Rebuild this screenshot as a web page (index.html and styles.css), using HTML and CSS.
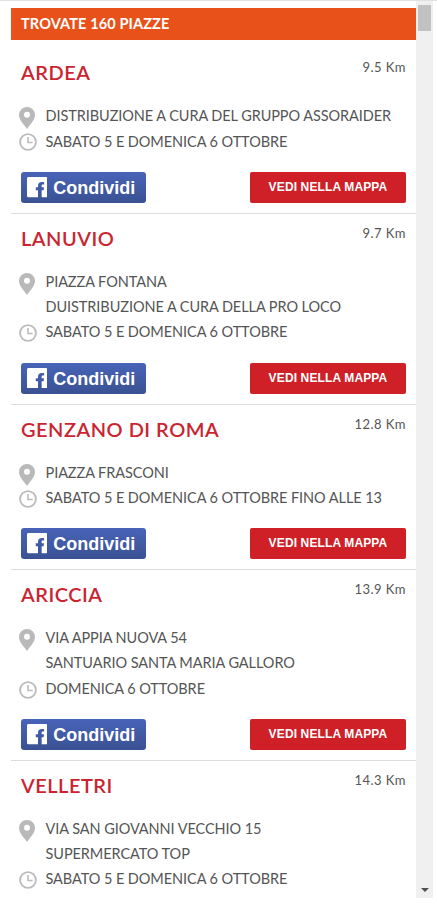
FILE: index.html
```
<!DOCTYPE html>
<html lang="it">
<head>
<meta charset="utf-8">
<title>Trovate 160 piazze</title>
<link rel="stylesheet" href="styles.css">
</head>
<body>
<svg class="defs" aria-hidden="true">
  <defs>
    <symbol id="pin" viewBox="0 0 16 22"><path fill="#b9b9b9" fill-rule="evenodd" d="M8 0a8 8 0 0 1 8 8c0 5-5 9.500-8 14C5 17.500 0 13 0 8a8 8 0 0 1 8-8zm0 4.700a3 3 0 1 0 0 6 3 3 0 0 0 0-6z"/></symbol>
    <symbol id="clock" viewBox="0 0 18 18"><g fill="none" stroke="#bcbcbc"><circle cx="9" cy="9" r="7.900" stroke-width="1.900"/><path d="M9 4v5.500h4.700" stroke-width="1.600"/></g></symbol>
    <symbol id="fb" viewBox="0 0 21 21"><path fill="#fff" d="M1.500 0h18A1.500 1.500 0 0 1 21 1.500v18a1.500 1.500 0 0 1-1.500 1.500H15v-7.500h2l.4-3H15V9.200c0-.9.4-1.400 1.400-1.400h1.100V5h-2.300c-2.600 0-3.900 1.300-3.900 3.800v1.700H9v3h2.300V21H1.500A1.500 1.500 0 0 1 0 19.500v-18A1.500 1.500 0 0 1 1.500 0z"/></symbol>
  </defs>
</svg>
<div class="frame">
  <main class="list">
    <h1 class="count">TROVATE 160 PIAZZE</h1>
    <section class="place">
      <header class="head"><h2 class="name">ARDEA</h2><span class="distance">9.5 Km</span></header>
      <div class="row"><svg class="pin"><use href="#pin"/></svg><p>DISTRIBUZIONE A CURA DEL GRUPPO ASSORAIDER</p></div>
      <div class="row"><svg class="clock"><use href="#clock"/></svg><p class="first-date">SABATO 5 E DOMENICA 6 OTTOBRE</p></div>
      <div class="actions"><a class="share"><svg class="fb"><use href="#fb"/></svg><span>Condividi</span></a><a class="map">VEDI NELLA MAPPA</a></div>
    </section>
    <section class="place">
      <header class="head"><h2 class="name">LANUVIO</h2><span class="distance">9.7 Km</span></header>
      <div class="row"><svg class="pin"><use href="#pin"/></svg><p>PIAZZA FONTANA<br>DUISTRIBUZIONE A CURA DELLA PRO LOCO</p></div>
      <div class="row"><svg class="clock"><use href="#clock"/></svg><p>SABATO 5 E DOMENICA 6 OTTOBRE</p></div>
      <div class="actions"><a class="share"><svg class="fb"><use href="#fb"/></svg><span>Condividi</span></a><a class="map">VEDI NELLA MAPPA</a></div>
    </section>
    <section class="place">
      <header class="head"><h2 class="name">GENZANO DI ROMA</h2><span class="distance">12.8 Km</span></header>
      <div class="row"><svg class="pin"><use href="#pin"/></svg><p>PIAZZA FRASCONI</p></div>
      <div class="row"><svg class="clock"><use href="#clock"/></svg><p>SABATO 5 E DOMENICA 6 OTTOBRE FINO ALLE 13</p></div>
      <div class="actions"><a class="share"><svg class="fb"><use href="#fb"/></svg><span>Condividi</span></a><a class="map">VEDI NELLA MAPPA</a></div>
    </section>
    <section class="place">
      <header class="head"><h2 class="name">ARICCIA</h2><span class="distance">13.9 Km</span></header>
      <div class="row"><svg class="pin"><use href="#pin"/></svg><p>VIA APPIA NUOVA 54<br>SANTUARIO SANTA MARIA GALLORO</p></div>
      <div class="row"><svg class="clock"><use href="#clock"/></svg><p>DOMENICA 6 OTTOBRE</p></div>
      <div class="actions"><a class="share"><svg class="fb"><use href="#fb"/></svg><span>Condividi</span></a><a class="map">VEDI NELLA MAPPA</a></div>
    </section>
    <section class="place last">
      <header class="head"><h2 class="name">VELLETRI</h2><span class="distance">14.3 Km</span></header>
      <div class="row"><svg class="pin"><use href="#pin"/></svg><p>VIA SAN GIOVANNI VECCHIO 15<br>SUPERMERCATO TOP</p></div>
      <div class="row"><svg class="clock"><use href="#clock"/></svg><p>SABATO 5 E DOMENICA 6 OTTOBRE</p></div>
    </section>
  </main>
  <div class="scrollbar"><div class="thumb"></div><svg class="arrow" viewBox="0 0 8 4"><path fill="#505050" d="M0 0h8L4 4z"/></svg></div>
</div>
</body>
</html>
```

FILE: styles.css
```
* { box-sizing: border-box; }
body { margin: 0; background: #fff; height: 909px; overflow: hidden; font-family: Lato, sans-serif; color: #555; }
h1, h2, p { margin: 0; }
.defs { display: block; width: 0; height: 0; }
.frame { display: flex; height: 898px; border-top: 1px solid #e0e0e0; overflow: hidden; }
.list { width: 405px; margin-left: 11px; padding-top: 7px; }
.count { height: 32px; margin-bottom: 8.200px; padding-left: 10px; background: #e8521a; color: #fff; font-size: 14.500px; font-weight: 700; line-height: 31px; letter-spacing: .13px; }
.place { border-bottom: 1px solid #ddd; padding: 0 10px 10px; }
.place.last { border-bottom: 0; }
.head { display: flex; justify-content: space-between; height: 55px; }
.name { color: #cb2431; font-size: 20px; font-weight: 600; line-height: 48px; letter-spacing: .5px; }
.distance { font-size: 13px; line-height: 38px; letter-spacing: .45px; }
.row { display: flex; align-items: flex-start; font-size: 14.500px; line-height: 25.200px; letter-spacing: -.07px; }
.first-date { padding-top: 1px; margin-bottom: -1px; }
.pin { width: 16px; height: 22px; margin: 4px 10.500px -3px -2px; }
.clock { width: 18px; height: 18px; margin: 5px 8.500px 0 -2px; }
.actions { display: flex; justify-content: space-between; margin-top: 18.200px; }
.share { display: flex; align-items: center; width: 125px; height: 31px; padding-left: 5.500px; border-radius: 3px; background: linear-gradient(#4864b8, #3a5192); color: #fff; font: bold 18px "Liberation Sans", sans-serif; }
.share span { padding-top: 2px; }
.fb { width: 20.500px; height: 20.500px; margin-right: 6.300px; }
.map { width: 156px; height: 31px; border-radius: 2px; background: #cf2027; color: #fff; font: bold 12px/30px "Liberation Sans", sans-serif; letter-spacing: .13px; text-align: center; }
.scrollbar { display: flex; flex-direction: column; justify-content: space-between; align-items: center; width: 17px; padding: 4px 0 6px; background: #f0f0f0; }
.thumb { width: 13px; height: 26px; background: #c1c1c1; }
.arrow { width: 8px; height: 4px; }
```
